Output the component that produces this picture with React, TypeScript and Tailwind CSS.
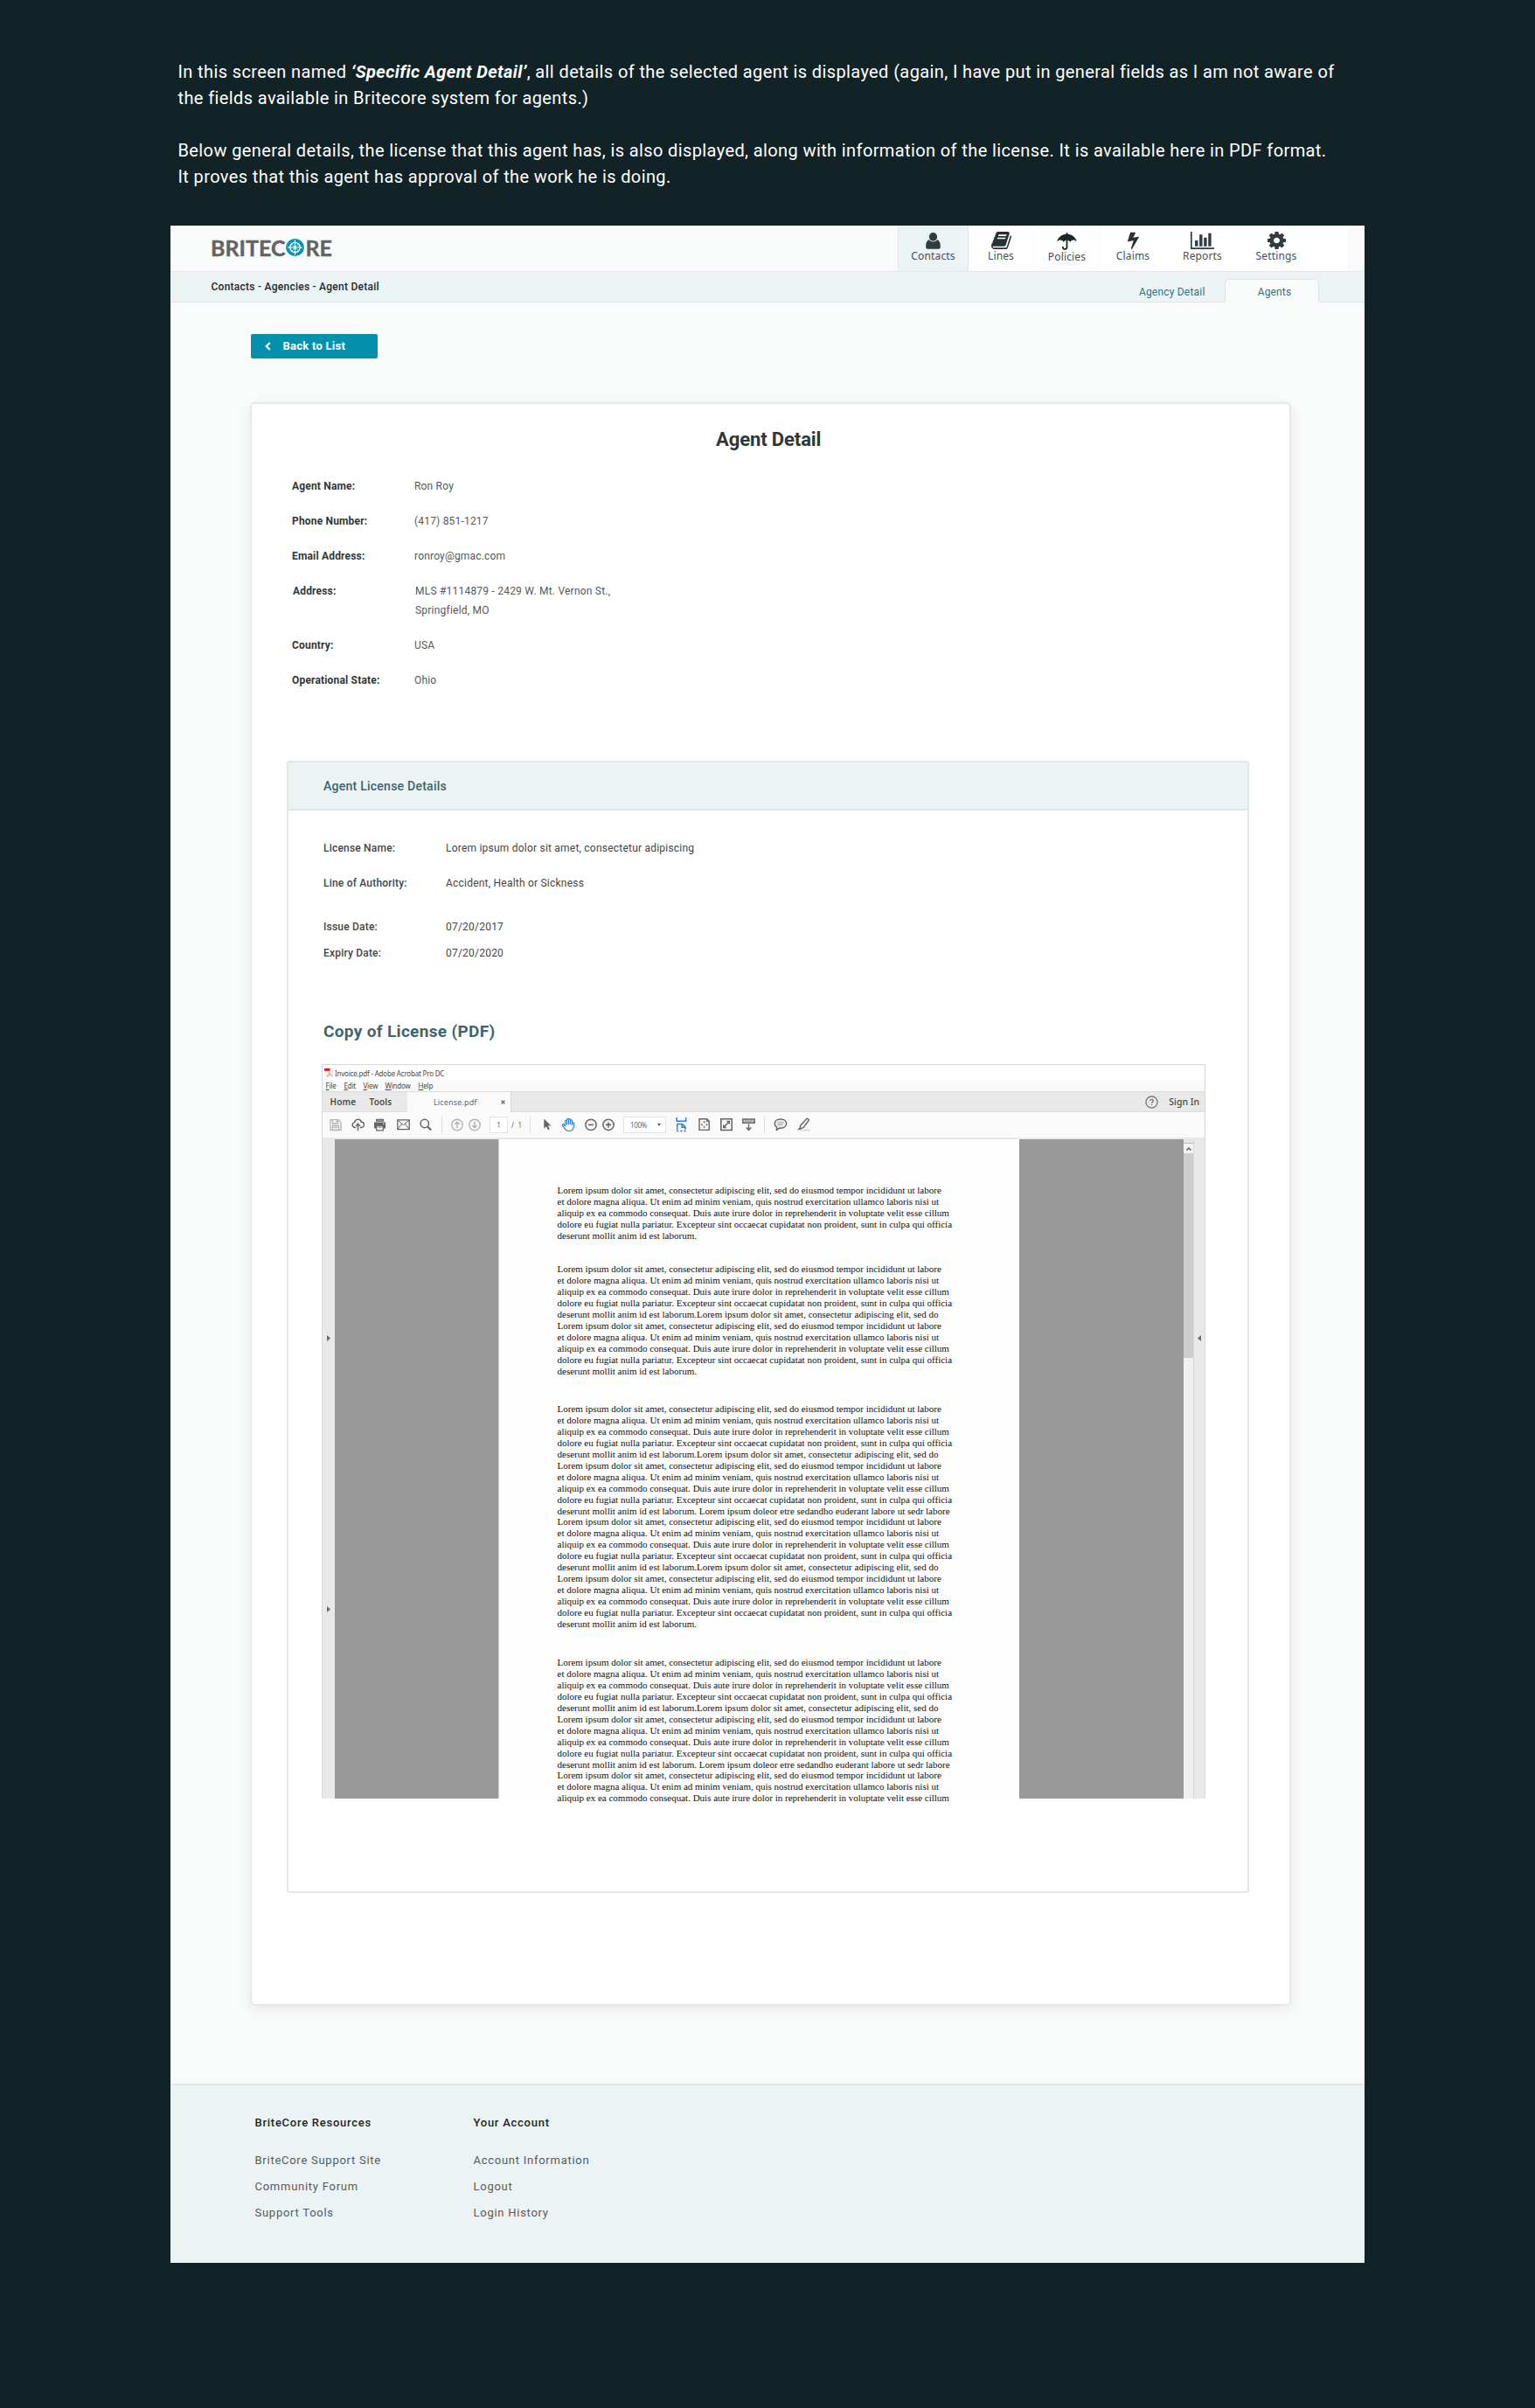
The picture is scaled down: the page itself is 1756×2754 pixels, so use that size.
import React from "react";
import type { ReactNode } from "react";

/* ---------- Navigation icons ---------- */

const UserIcon = () => (
  <svg width="17" height="19" viewBox="0 0 17 19" fill="#2f3d40">
    <ellipse cx="8.5" cy="4.9" rx="4.6" ry="4.9" />
    <path d="M3.600 8.100C1.400 9.400.2 12 .2 15v1.600C.2 18 1 18.800 2.300 18.800h12.400c1.300 0 2.100-.8 2.100-2.200V15c0-3-1.200-5.600-3.400-6.900-1 1.500-2.800 2.400-4.900 2.400S4.600 9.600 3.600 8.100z" />
  </svg>
);

const BookIcon = () => (
  <svg width="23" height="20" viewBox="64 128 1664 1536" preserveAspectRatio="none" fill="#263336">
    <path d="M1703 478q40 57 18 129l-275 906q-19 64-76.500 107.500t-122.500 43.500h-923q-77 0-148.500-53.500t-99.500-131.500q-24-67-2-127 0-4 3-27t4-37q1-8-3-21.500t-3-19.500q2-11 8-21t16.500-23.500 16.500-23.500q23-38 45-91.500t30-91.500q3-10 .5-30t-.5-28q3-11 17-28t17-23q21-36 42-92t25-90q1-9-2.500-32t.5-28q4-13 22-30.500t22-22.500q19-26 42.500-84.500t27.500-96.500q1-8-3-25.500t-2-26.500q2-8 9-18t18-23 17-21q8-12 16.500-30.500t15-35 16-36 19.500-32 26.500-23.500 36-11.500 47.500 5.500l-1 3q38-9 51-9h761q74 0 114 56t18 130l-274 906q-36 119-71.500 153.500t-128.500 34.500h-869q-27 0-38 15-11 16-1 43 24 70 144 70h923q29 0 56-15.500t35-41.500l300-987q7-22 5-57 38 15 59 43zm-1064 2q-4 13 2 22.500t20 9.500h608q13 0 25.500-9.500t16.500-22.500l21-64q4-13-2-22.500t-20-9.500h-608q-13 0-25.500 9.500t-16.500 22.500zm-83 256q-4 13 2 22.500t20 9.500h608q13 0 25.500-9.500t16.500-22.500l21-64q4-13-2-22.500t-20-9.500h-608q-13 0-25.500 9.500t-16.500 22.500z" />
  </svg>
);

const UmbrellaIcon = () => (
  <svg width="23" height="20" viewBox="0 0 23 20">
    <path
      d="M11.500 0c.6 0 .9.400.9.900v.8c4.700.4 8.700 3.200 10.200 7.700.1.400-.2.700-.6.400-1-1-1.900-1.400-3-1.400-1.500 0-2.700.8-3.500 2-.2.3-.4.3-.6 0-.8-1.100-1.900-2-3.400-2s-2.600.9-3.400 2c-.2.300-.4.3-.6 0-.8-1.200-2-2-3.500-2-1.100 0-2 .4-3 1.400-.4.300-.7 0-.6-.4C1.900 4.900 5.900 2.100 10.600 1.700V.9c0-.5.300-.9.900-.9z"
      fill="#1d2426"
    />
    <path d="M11.500 8v8.600c0 1.400-1 2.400-2.300 2.400s-2.300-1-2.300-2.400" fill="none" stroke="#1d2426" strokeWidth="1.8" strokeLinecap="round" />
  </svg>
);

const BoltIcon = () => (
  <svg width="13" height="20" viewBox="448 0 896 1664" preserveAspectRatio="none" fill="#263336">
    <path d="M1333 566q18 20 7 44l-540 1157q-13 25-42 25-4 0-14-2-17-5-25.500-19t-4.500-30l197-808-406 101q-4 1-12 1-18 0-31-11-18-15-13-39l201-825q4-14 16-23t28-9h328q19 0 32 12.500t13 29.500q0 8-5 18l-171 463 396-98q8-2 12-2 19 0 34 15z" transform="translate(0 -60) scale(1 .96)" />
  </svg>
);

const ChartIcon = () => (
  <svg width="27" height="20" viewBox="0 0 2048 1536" preserveAspectRatio="none" fill="#2f3d40">
    <path d="M640 768v512h-256v-512h256zm384-512v1024h-256v-1024h256zm1024 1152v128h-2048v-1536h128v1408h1920zm-640-896v768h-256v-768h256zm384-384v1152h-256v-1152h256z" />
  </svg>
);

const CogIcon = () => (
  <svg width="21" height="20" viewBox="128 128 1536 1536" preserveAspectRatio="none" fill="#2f3d40">
    <path d="M1152 896q0-106-75-181t-181-75-181 75-75 181 75 181 181 75 181-75 75-181zm512-109v222q0 12-8 23t-20 13l-185 28q-19 54-39 91 35 50 107 138 10 12 10 25t-9 23q-27 37-99 108t-94 71q-12 0-26-9l-138-108q-44 23-91 38-16 136-29 186-7 28-36 28h-222q-14 0-24.500-8.500t-11.500-21.500l-28-184q-49-16-90-37l-141 107q-10 9-25 9-14 0-25-11-126-114-165-168-7-10-7-23 0-12 8-23 15-21 51-66.500t54-70.500q-27-50-41-99l-183-27q-13-2-21-12.500t-8-23.500v-222q0-12 8-23t19-13l186-28q14-46 39-92-40-57-107-138-10-12-10-24 0-10 9-23 26-36 98.500-107.500t94.500-71.500q13 0 26 10l138 107q44-23 91-38 16-136 29-186 7-28 36-28h222q14 0 24.500 8.500t11.500 21.500l28 184q49 16 90 37l142-107q9-9 24-9 13 0 25 10 129 119 165 170 7 8 7 22 0 12-8 23-15 21-51 66.500t-54 70.500q26 50 41 98l183 28q13 2 21 12.500t8 23.500z" />
  </svg>
);

/* ---------- Header ---------- */

const Logo = () => (
  <div className="flex h-[26px] items-center font-['Lato',sans-serif] text-[25px] leading-[26px] font-bold text-[#636363] [-webkit-text-stroke:0.4px_#636363]">
    <span>BRITEC</span>
    <svg width="21" height="20" viewBox="0 0 21 20" className="mx-[1px]">
      <ellipse cx="10.500" cy="10" rx="10.500" ry="9.900" fill="#0a94ae" />
      <g fill="none" stroke="#fff">
        <circle cx="10.500" cy="10" r="5.700" strokeWidth="1.300" />
        <path d="M10.500 1.500v17M2 10h17" strokeWidth="1.200" />
        <path d="M6.500 6l8 8M14.500 6l-8 8" strokeWidth=".7" />
      </g>
      <circle cx="10.500" cy="10" r="1.600" fill="#fff" />
    </svg>
    <span>RE</span>
  </div>
);

const NavItem = ({ icon, label, className }: { icon: ReactNode; label: string; className: string }) => (
  <div className={`flex h-full flex-col items-center ${className}`}>
    <div className="mt-[7px] flex h-5 items-center justify-center">{icon}</div>
    <div className="font-['Noto_Sans',sans-serif] text-[12px] leading-4 tracking-[0.15px] text-[#4a4f50]">{label}</div>
  </div>
);

const Header = () => (
  <header className="flex h-[53px] border-b border-[#e3e9ea] bg-[#f9fbfa]">
    <div className="flex-1 pt-[12px] pl-[46px]">
      <Logo />
    </div>
    <nav className="mr-5 flex bg-white">
      <NavItem icon={<UserIcon />} label="Contacts" className="-mb-px h-[53px] w-[81px] border-x border-[#dfe5ea] bg-[#ebf3f5]" />
      <NavItem icon={<BookIcon />} label="Lines" className="w-[74px]" />
      <NavItem icon={<UmbrellaIcon />} label="Policies" className="w-[77px] bg-[#fdfdfd] pt-px" />
      <NavItem icon={<BoltIcon />} label="Claims" className="w-[74px]" />
      <NavItem icon={<ChartIcon />} label="Reports" className="w-[85px]" />
      <NavItem icon={<CogIcon />} label="Settings" className="mr-[39px] w-[84px]" />
    </nav>
  </header>
);

const SubNav = () => (
  <div className="flex h-[35px] border-b border-[#dfe7e8] bg-[#ebf3f5] pl-[46.500px] text-[12px]">
    <div className="flex-1 leading-[34px] font-medium tracking-[0.25px] text-[#22292b]">Contacts - Agencies - Agent Detail</div>
    <div className="mt-[15px] mr-[22.500px] leading-4 tracking-[0.2px] text-[#37717b]">Agency Detail</div>
    <div className="mt-2 mr-[52px] -mb-px flex w-[108px] justify-center rounded-t-[5px] border border-b-0 border-[#dfe7e8] bg-[#f9fbfa] pt-[6px] pl-[6px] leading-4 tracking-[0.15px] text-[#37717b]">
      Agents
    </div>
  </div>
);

/* ---------- Detail rows ---------- */

const AgentRow = ({ label, value }: { label: string; value: string }) => (
  <div className="flex h-10 text-[12px] leading-10">
    <div className="w-[140px] font-bold tracking-[0.18px] text-[#2f3739]">{label}</div>
    <div className="tracking-[0.19px] text-[#55595a]">{value}</div>
  </div>
);

const LicenseRow = ({ label, value, className }: { label: string; value: string; className: string }) => (
  <div className={`flex text-[12px] text-[#454545] ${className}`}>
    <div className="w-[140px] font-medium tracking-[0.2px]">{label}</div>
    <div className="tracking-[0.22px]">{value}</div>
  </div>
);

/* ---------- PDF viewer ---------- */

const DARK = "#646464";
const LIGHT = "#b3b3b3";
const BLUE = "#2f80d2";

const Tool = ({ w, className, children }: { w: number; className: string; children: ReactNode }) => (
  <svg width={w} height="19" viewBox={`0 0 ${w} 19`} fill="none" className={`shrink-0 ${className}`}>
    {children}
  </svg>
);

const Toolbar = () => (
  <div className="flex h-[31px] items-start border-b-2 border-[#e7e7e7] bg-[#fafafa] pt-[5px]">
    <Tool w={14} className="ml-2">
      <g stroke={LIGHT} strokeWidth="1.300">
        <path d="M1 3.700h9l3 3v8.800H1z" />
        <path d="M3.500 4v4h6V4M3.500 15v-4.500h7V15M5 12.500h4M7.800 4.500v2" />
      </g>
    </Tool>
    <Tool w={15} className="ml-[11px]">
      <path d="M5.200 12.500H3.800A3 3 0 0 1 3.500 6.600 4 4 0 0 1 11.300 6.300 3.100 3.100 0 0 1 11.400 12.500H9.800" stroke={DARK} strokeWidth="1.400" />
      <path d="M7.500 16.200V8.500M5 11l2.500-2.700L10 11" stroke={DARK} strokeWidth="1.400" />
    </Tool>
    <Tool w={15} className="ml-[10px]">
      <path d="M3 2.800h9v3H3zM1 6.500h13v7h-2.500v-2.800h-8v2.800H1z" fill={DARK} />
      <path d="M3.700 10.800h7.600v5H3.700z" fill="#fff" stroke={DARK} strokeWidth="1.300" />
      <path d="M5.500 12.700h4M4.200 4.300h6.500" stroke="#999" />
      <path d="M11 8.300h1.500" stroke="#fff" />
    </Tool>
    <Tool w={15} className="ml-3">
      <g stroke={DARK} strokeWidth="1.300">
        <path d="M.8 3.900h13.400v10.700H.8z" />
        <path d="M1 4.200l6.500 5.500L14 4.200M1 14.300l4.700-6M14 14.300l-4.700-6" strokeWidth="1" />
      </g>
    </Tool>
    <Tool w={14} className="ml-[11px]">
      <circle cx="5.800" cy="8" r="4.700" stroke={DARK} strokeWidth="1.500" />
      <path d="M9.200 11.500l4 4" stroke={DARK} strokeWidth="1.900" />
    </Tool>
    <div className="ml-[11px] h-[19px] w-px bg-[#dedede]" />
    <Tool w={14} className="ml-[10px]">
      <circle cx="7" cy="9.500" r="6.200" stroke={LIGHT} strokeWidth="1.400" />
      <path d="M7 13.100V6.500M4.300 9L7 6.200 9.700 9" stroke={LIGHT} strokeWidth="1.400" />
    </Tool>
    <Tool w={14} className="ml-[6px]">
      <circle cx="7" cy="9.500" r="6.200" stroke={LIGHT} strokeWidth="1.400" />
      <path d="M7 5.900v6.600M4.300 10L7 12.800 9.700 10" stroke={LIGHT} strokeWidth="1.400" />
    </Tool>
    <div className="ml-[10px] flex h-[19px] w-[21px] items-center justify-center border border-[#e2e2e2] bg-white text-[8px] text-[#6a6a6a]">1</div>
    <div className="ml-[4px] flex h-[19px] w-[12px] items-center justify-between text-[8px] text-[#6a6a6a]">
      <span>/</span>
      <span>1</span>
    </div>
    <div className="ml-[9px] h-[19px] w-px bg-[#dedede]" />
    <Tool w={10} className="ml-[14px]">
      <path d="M1.300 2.500v11.300l2.600-2.500 1.900 4 2-.9-1.900-3.900h3.500z" fill={DARK} />
    </Tool>
    <Tool w={17} className="ml-[11px]">
      <path
        d="M4.700 11.300V5.100a.95.95 0 0 1 1.900 0V9.500M6.600 4.500V3.400a1 1 0 0 1 2 0V9M8.600 3.500a1 1 0 0 1 2 0V9M10.600 4.700a.95.95 0 0 1 1.900 0V10M12.500 8.100c.2-1.500 2.100-1.600 2.200-.2 0 4.300-1.300 8.600-5.600 8.600-3.400 0-4.600-1.700-6-4.200L1.500 10.200C.9 9 2.400 8.100 3.300 9.100l1.400 2.200"
        stroke={BLUE}
        strokeWidth="1.200"
        strokeLinejoin="round"
      />
    </Tool>
    <Tool w={14} className="ml-[10px]">
      <circle cx="7" cy="9.400" r="6.100" stroke={DARK} strokeWidth="1.500" />
      <path d="M4 9.400h6" stroke={DARK} strokeWidth="1.600" />
    </Tool>
    <Tool w={14} className="ml-[6px]">
      <circle cx="7" cy="9.400" r="6.100" stroke={DARK} strokeWidth="1.500" />
      <path d="M4 9.400h6M7 6.400v6" stroke={DARK} strokeWidth="1.600" />
    </Tool>
    <div className="ml-[10px] flex h-[19px] w-[49px] items-center justify-between border border-[#e2e2e2] bg-white pr-[5px] pl-[7px] text-[8px] tracking-[-0.3px] text-[#6a6a6a]">
      <span>100%</span>
      <svg width="4" height="3" viewBox="0 0 4 3">
        <path d="M0 0h4L2 2.800z" fill="#555" />
      </svg>
    </div>
    <Tool w={13} className="ml-[11px]">
      <path d="M1.200 1v4.200h10.400V1" stroke={BLUE} strokeWidth="1.500" />
      <path d="M1.700 15V8.600h5.800l3.400 3.300V15" stroke={BLUE} strokeWidth="1.500" />
      <path d="M7 8.600v3.600h4M1 16.600h2.200M5.200 16.600h2.300M9.400 16.600h2.200" stroke={BLUE} strokeWidth="1.500" />
    </Tool>
    <Tool w={13} className="ml-[13px]">
      <path d="M1 2.700h8.500l2.700 2.700v10H1z" stroke={DARK} strokeWidth="1.400" />
      <path d="M9.300 2.700v3h3" stroke={DARK} />
      <path d="M6.600 5l1.500 2H5.100zM6.600 13.500l1.500-2H5.100zM2.500 9.300l1.900-1.500v3zM10.700 9.300L8.800 7.800v3z" fill={DARK} />
    </Tool>
    <Tool w={14} className="ml-[12px]">
      <path d="M.8 2.800h12.400v12.600H.8z" stroke={DARK} strokeWidth="1.500" />
      <path d="M3 13.300V9l4.300 4.300zM11 4.800v4.300L6.700 4.800z" fill={DARK} />
      <path d="M4.500 11.800l5-5.400" stroke={DARK} strokeWidth="1.500" />
    </Tool>
    <Tool w={15} className="ml-[11px]">
      <path d="M.8 3h13.400v4.200H.8z" fill="#d8d8d8" stroke={DARK} strokeWidth="1.400" />
      <path d="M3 5.100h9.500" stroke={DARK} strokeWidth="1.200" strokeDasharray="1.200 1" />
      <path d="M7.500 8.500v6.500M4.800 12.600l2.700 2.800 2.700-2.800" stroke={DARK} strokeWidth="1.400" />
    </Tool>
    <div className="ml-[10px] h-[19px] w-px bg-[#dedede]" />
    <Tool w={16} className="ml-[10px]">
      <path d="M8 3c3.900 0 6.700 2.100 6.700 5.100S12 13.200 8 13.200c-.5 0-1 0-1.400-.1L3.300 15.600l.3-3.500C2.100 11.200 1.200 9.800 1.200 8.100 1.200 5.100 4.100 3 8 3z" fill="#ececec" stroke={DARK} strokeWidth="1.400" strokeLinejoin="round" />
      <path d="M4.500 7h7M4.500 9.300h5.500" stroke="#999" />
    </Tool>
    <Tool w={16} className="ml-[10px]">
      <path d="M5 14.800h10.500v1.700H2.500z" fill="#d6d6d6" />
      <path d="M11.800 2.500c.8-.7 3 1 2.300 2L8 12.700l-3.900 1.500.6-4z" stroke={DARK} strokeWidth="1.400" strokeLinejoin="round" />
      <path d="M3.500 12.500l1.700 1.700-4.200 1.500z" fill={DARK} />
    </Tool>
  </div>
);

const MenuEntry = ({ text, className }: { text: string; className: string }) => (
  <div className={className}>
    <span className="underline underline-offset-[1px]">{text[0]}</span>
    {text.slice(1)}
  </div>
);

const L1 = "Lorem ipsum dolor sit amet, consectetur adipiscing elit, sed do eiusmod tempor incididunt ut labore";
const L2 = "et dolore magna aliqua. Ut enim ad minim veniam, quis nostrud exercitation ullamco laboris nisi ut";
const L3 = "aliquip ex ea commodo consequat. Duis aute irure dolor in reprehenderit in voluptate velit esse cillum";
const L4 = "dolore eu fugiat nulla pariatur. Excepteur sint occaecat cupidatat non proident, sunt in culpa qui officia";
const END = "deserunt mollit anim id est laborum.";
const END_LOREM = END + "Lorem ipsum dolor sit amet, consectetur adipiscing elit, sed do";
const END_LABORE = END + " Lorem ipsum doleor etre sedandho euderant labore ut sedr labore";

const BODY = [L1, L2, L3, L4];

const Block = ({ lines, className }: { lines: string[]; className: string }) => (
  <div className={className}>
    {lines.map((line, i) => (
      <div key={i}>{line}</div>
    ))}
  </div>
);

const ArrowRight = () => (
  <svg width="4" height="7" viewBox="0 0 4 7" fill="#6b6b6b">
    <path d="M0 0l4 3.500L0 7z" />
  </svg>
);

const PdfViewer = () => (
  <div className="mt-[23px] ml-[38px] w-[1011px] border border-b-0 border-[#d9d9d9] font-['Noto_Sans',sans-serif] text-[#4a4a4a]">
    <div className="flex h-[17px] items-center bg-white pl-[2px]">
      <svg width="10" height="11" viewBox="0 0 10 11">
        <path d="M2 .5h5.500L9.500 2.500v8H2z" fill="#fafafa" stroke="#d5d5d5" strokeWidth=".7" />
        <path d="M0 1h6.500v2.800H0z" fill="#e5120f" />
        <path d="M3.500 9.500C5 8 5.700 6.500 5.700 5c.2 1.700 1.200 2.800 3 3.400-1.700-.4-3.400.1-5.200 1.100z" fill="none" stroke="#ef6a68" strokeWidth=".7" />
      </svg>
      <div className="ml-[2px] pt-px text-[8px] leading-[17px] tracking-[-0.2px]">Invoice.pdf - Adobe Acrobat Pro DC</div>
    </div>
    <div className="flex h-[14px] border-b border-[#dcdcdc] bg-[#f9f9f9] text-[8px] leading-[13px] tracking-[-0.2px]">
      <MenuEntry text="File" className="ml-[3.500px] w-[21px]" />
      <MenuEntry text="Edit" className="w-[22px]" />
      <MenuEntry text="View" className="w-[25px]" />
      <MenuEntry text="Window" className="w-[38px]" />
      <MenuEntry text="Help" className="" />
    </div>
    <div className="flex h-[23px] bg-[#e9e9e9] leading-[22px]">
      <div className="w-[97px] border-b border-[#e0e0e0] pl-[8.500px] text-[10px] font-semibold tracking-[0.1px]">
        Home<span className="ml-[15.500px]">Tools</span>
      </div>
      <div className="flex w-[118px] items-center justify-between bg-[#fafafa] pr-[6px] pl-[30px] text-[9px] tracking-[0.15px] text-[#6a6a6a]">
        <span>License.pdf</span>
        <svg width="5" height="5" viewBox="0 0 5 5" stroke="#555" strokeWidth="1.200">
          <path d="M.6.6l3.800 3.800M4.400.6L.6 4.400" />
        </svg>
      </div>
      <div className="flex flex-1 items-center justify-end border-b border-l border-[#dcdcdc] pr-[6px]">
        <svg width="15" height="15" viewBox="0 0 15 15" fill="none" stroke="#6a6a6a">
          <circle cx="7.500" cy="7.500" r="6.600" strokeWidth="1.200" />
          <path d="M5.700 6c0-2.400 3.700-2.300 3.600 0 0 1.200-1.700 1.300-1.700 2.700M7.600 9.900v1.200" strokeWidth="1.200" />
        </svg>
        <div className="ml-[12px] text-[10.500px] font-medium">Sign In</div>
      </div>
    </div>
    <Toolbar />
    <div className="flex h-[754px]">
      <div className="flex w-[14px] flex-col items-center bg-[#e9e9e9] pt-[224px]">
        <ArrowRight />
        <div className="h-[303px]" />
        <ArrowRight />
      </div>
      <div className="w-[187px] bg-[#999999]" />
      <div className="w-px bg-[#d0d0d0]" />
      <div className="w-[595px] bg-[#fefefe] pt-[52px] pl-[66.500px] font-['Liberation_Serif',serif] text-[11px] leading-[13px] whitespace-nowrap text-[#101010]">
        <Block lines={[...BODY, END]} className="" />
        <Block lines={[...BODY, END_LOREM, ...BODY, END]} className="mt-[25px]" />
        <Block lines={[...BODY, END_LOREM, ...BODY, END_LABORE]} className="mt-[30px]" />
        <Block lines={[...BODY, END_LOREM, ...BODY, END]} className="-mt-px" />
        <Block lines={[...BODY, END_LOREM, ...BODY, END_LABORE]} className="mt-[31px]" />
        <Block lines={[L1, L2, L3]} className="-mt-px" />
      </div>
      <div className="w-[188px] bg-[#999999]" />
      <div className="flex w-[11px] flex-col bg-[#f0f0f0]">
        <div className="h-[4px] bg-[#e4e4e4]" />
        <div className="flex h-[12px] items-center justify-center border-t border-[#bdbdbd] bg-[#f3f3f3]">
          <svg width="6" height="4" viewBox="0 0 6 4" fill="none" stroke="#555" strokeWidth="1.300">
            <path d="M.5 3.500L3 1l2.500 2.500" />
          </svg>
        </div>
        <div className="h-[234px] bg-[#cdcdcd]" />
      </div>
      <div className="w-px bg-[#d9d9d9]" />
      <div className="flex w-[12px] flex-col items-center bg-[#e9e9e9] pt-[224px]">
        <svg width="4" height="7" viewBox="0 0 4 7" fill="#6b6b6b">
          <path d="M4 0L0 3.500 4 7z" />
        </svg>
      </div>
    </div>
  </div>
);

/* ---------- Footer ---------- */

const FooterColumn = ({ title, links }: { title: string; links: string[] }) => (
  <div className="w-[250px] text-[13px] tracking-[0.74px]">
    <div className="leading-5 font-medium text-[#1d2527]">{title}</div>
    <ul className="mt-[18px] leading-[30px] text-[#555c5e]">
      {links.map((link) => (
        <li key={link}>{link}</li>
      ))}
    </ul>
  </div>
);

export default function App() {
  return (
    <div className="h-[2754px] w-[1756px] bg-[#112326] pt-[67px] font-['Roboto',sans-serif]">
      <div className="ml-[203.500px] text-[20px] leading-[30px] tracking-[0.39px] whitespace-nowrap text-white">
        <p>
          In this screen named <span className="font-bold italic">‘Specific Agent Detail’</span>, all details of the selected agent is displayed (again, I have put in general fields as I am not aware of
          <br />
          the fields available in Britecore system for agents.)
        </p>
        <p className="mt-[30px]">
          Below general details, the license that this agent has, is also displayed, along with information of the license. It is available here in PDF format.
          <br />
          It proves that this agent has approval of the work he is doing.
        </p>
      </div>

      <div className="mt-[41px] ml-[195px] flex h-[2330px] w-[1366px] flex-col bg-[#f9fbfa]">
        <Header />
        <SubNav />
        <main className="flex-1 pt-[36px] pl-[91px]">
          <button className="ml-px flex h-7 w-[145px] items-center rounded-[2px] bg-[#0292ad] pl-[16px] text-[13px] font-bold tracking-[0.26px] text-white">
            <svg width="7" height="10" viewBox="0 0 7 10" fill="none" stroke="#fff" strokeWidth="2.200">
              <path d="M5.700 1L1.700 5l4 4" />
            </svg>
            <span className="ml-[13.500px]">Back to List</span>
          </button>

          <section className="mt-[50px] h-[1834px] w-[1191px] rounded-[6px] border-2 border-[#e5e8e8] bg-white shadow-[0_4px_16px_rgba(0,0,0,0.07)]">
            <h1 className="mt-[28px] ml-[531px] text-[22px] leading-[26px] font-bold tracking-[-0.1px] text-[#2f3739]">Agent Detail</h1>
            <div className="mt-5 ml-[46px]">
              <AgentRow label="Agent Name:" value="Ron Roy" />
              <AgentRow label="Phone Number:" value="(417) 851-1217" />
              <AgentRow label="Email Address:" value="ronroy@gmac.com" />
              <div className="ml-px flex h-[62px] pt-[9px] text-[12px] leading-[22px]">
                <div className="w-[140px] font-bold tracking-[0.18px] text-[#2f3739]">Address:</div>
                <div className="tracking-[0.22px] text-[#55595a]">
                  MLS #1114879 - 2429 W. Mt. Vernon St.,
                  <br />
                  Springfield, MO
                </div>
              </div>
              <AgentRow label="Country:" value="USA" />
              <AgentRow label="Operational State:" value="Ohio" />
            </div>

            <div className="mt-[72px] ml-10 h-[1295px] w-[1101px] rounded-[3px] border-2 border-[#e3e7e7]">
              <h2 className="h-[55px] border-b-2 border-[#dfe6e7] bg-[#ebf3f5] pt-px pl-[40px] text-[14px] leading-[53px] font-medium tracking-[0.25px] text-[#3c656e]">
                Agent License Details
              </h2>
              <div className="mt-[23px] ml-[40px]">
                <LicenseRow label="License Name:" value="Lorem ipsum dolor sit amet, consectetur adipiscing" className="leading-10" />
                <LicenseRow label="Line of Authority:" value="Accident, Health or Sickness" className="leading-10" />
                <LicenseRow label="Issue Date:" value="07/20/2017" className="mt-[15px] leading-[30px]" />
                <LicenseRow label="Expiry Date:" value="07/20/2020" className="leading-[30px]" />
                <h3 className="mt-[61px] text-[19px] leading-7 font-bold tracking-[0.33px] text-[#3c656e]">Copy of License (PDF)</h3>
              </div>
              <PdfViewer />
            </div>
          </section>
        </main>
        <footer className="flex h-[205px] border-t-2 border-[#e0e8e8] bg-[#ebf3f5] pt-[33px] pl-[96.500px]">
          <FooterColumn title="BriteCore Resources" links={["BriteCore Support Site", "Community Forum", "Support Tools"]} />
          <FooterColumn title="Your Account" links={["Account Information", "Logout", "Login History"]} />
        </footer>
      </div>
    </div>
  );
}
